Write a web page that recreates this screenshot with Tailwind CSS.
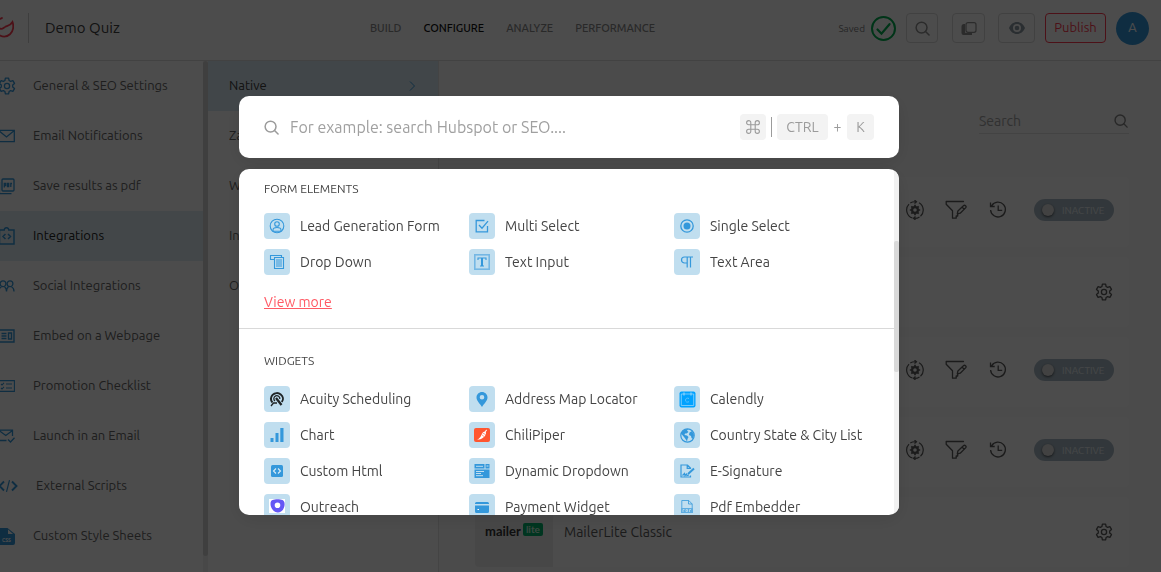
<!DOCTYPE html>
<html lang="en">
<head>
<meta charset="utf-8">
<meta name="viewport" content="width=device-width, initial-scale=1">
<title>Demo Quiz</title>
<script src="https://cdn.jsdelivr.net/npm/@tailwindcss/browser@4"></script>
</head>
<body class="h-screen overflow-hidden bg-white font-['Ubuntu','Noto_Sans',sans-serif] text-[13px] text-[#3c3c3c]">
<svg class="hidden">
  <defs>
    <symbol id="search" viewBox="0 0 16 16"><g fill="none" stroke="currentColor" stroke-width="1.600" stroke-linecap="round"><circle cx="7" cy="7" r="5.800"/><path d="M11.200 11.200L15 15"/></g></symbol>
    <symbol id="gear" viewBox="0 0 18 18"><g fill="none" stroke="currentColor" stroke-width="1.300" stroke-linejoin="round"><path d="M7.400 1.200h3.200l.5 2.300 1.500.9 2.300-.8 1.600 2.800-1.800 1.600v2l1.800 1.600-1.600 2.800-2.300-.8-1.500.9-.5 2.300H7.400l-.5-2.300-1.500-.9-2.300.8-1.600-2.800L3.300 10V8L1.500 6.400l1.600-2.800 2.300.8 1.500-.9z"/><circle cx="9" cy="9" r="2.600"/></g></symbol>
    <symbol id="sync" viewBox="0 0 20 20"><g fill="none" stroke="currentColor" stroke-width="1.200"><path d="M7.500 18A8.400 8.400 0 0 1 4 4.200M5.300 3.100A8.400 8.400 0 0 1 10.500 1.800M14 2.800A8.400 8.400 0 0 1 15.500 16.300M14.500 16.900A8.400 8.400 0 0 1 9.500 18.300M9.500 0l2 1.800-2 1.700M10.500 16.500l-2 1.800 2 1.700"/><circle cx="10" cy="10" r="2.900" stroke-width="2.200"/><path stroke-width="1.700" d="M10 4.800v2M10 13.200v2M4.800 10h2M13.200 10h2M6.300 6.300l1.400 1.400M12.300 12.300l1.400 1.400M6.300 13.700l1.400-1.400M12.300 7.700l1.400-1.400"/></g></symbol>
    <symbol id="filter" viewBox="0 0 22 20"><g fill="none" stroke="currentColor" stroke-width="1.300" stroke-linejoin="round" stroke-linecap="round"><path d="M18.500 1.500H1.200v2.700l6.300 6.600v7.400h3.700v-2.200h1.500v-1.500"/><path d="M12.300 13.800l.6-2.800 5.500-5.200a1.400 1.400 0 0 1 2.200 2.100L15.200 13.200zM17 7l2.200 2.200"/></g></symbol>
    <symbol id="history" viewBox="0 0 18 18"><g fill="none" stroke="currentColor" stroke-width="1.300"><path d="M2.600 4.800A7.400 7.400 0 1 1 1.600 9M1.500 1.500v4h4.200M9.200 4.600v4.800h4"/></g></symbol>
    <symbol id="mail" viewBox="0 0 17 14"><path fill="none" stroke="currentColor" stroke-width="1.300" d="M.7 1.300h15.600v11.400H.7zM.7 1.500l7.800 6.500 7.800-6.500"/></symbol>
  </defs>
</svg>

<div class="flex h-full flex-col">
  <header class="flex h-[61px] shrink-0 items-center border-b border-[#dcdcdc] pr-3 pb-1">
    <svg class="h-[26px] w-[14px] shrink-0 text-[#ff3b50]" viewBox="0 0 14 26"><g fill="none" stroke="currentColor" stroke-width="1.800" stroke-linecap="round"><path d="M0 4c.8-.3 1.500-.6 2-1M0 13.500c2 1.500 3.500-.8 5.500-1.800 2.500-1 5-1.200 7-4.700 1.500 4 .8 9.500-2.500 12.200C7 21.800 3 22 0 20.500"/></g></svg>
    <div class="ml-3.5 h-[30px] w-px bg-[#cfcfcf]"></div>
    <h1 class="ml-4 w-[250px] text-[15px] text-[#404040]">Demo Quiz</h1>
    <nav class="ml-[75px] flex gap-[22px] text-[11px] font-medium text-[#8a8a8a]">
      <a href="#">BUILD</a><a href="#" class="text-[#101010]">CONFIGURE</a><a href="#">ANALYZE</a><a href="#">PERFORMANCE</a>
    </nav>
    <div class="ml-auto flex items-center">
      <span class="mr-1.5 text-[10px] text-[#808080]">Saved</span>
      <svg class="mr-2.5 size-[25px] text-[#00b050]" viewBox="0 0 25 25"><g fill="none" stroke="currentColor"><circle cx="12.500" cy="12.500" r="11.500" stroke-width="2"/><path stroke-width="2.200" stroke-linecap="round" d="M6.500 13.500l4 4.200 8-9.500"/></g></svg>
      <button aria-label="Search" class="mr-3.5 flex h-[30px] w-8 items-center justify-center rounded-sm border border-[#dadada] text-[#909090]"><svg class="size-[15px]"><use href="#search"/></svg></button>
      <button aria-label="Duplicate" class="mr-[13px] flex h-[30px] w-[33px] items-center justify-center rounded-sm border border-[#dadada] text-[#909090]"><svg class="h-[13px] w-4" viewBox="0 0 16 13"><path fill="currentColor" d="M3 2h1v8q0 1 1 1h6v2H2.500Q.5 13 .5 11V4.500Q.5 2 3 2z"/><rect x="5" y=".7" width="10" height="9.600" rx="2" fill="none" stroke="currentColor" stroke-width="1.200"/></svg></button>
      <button aria-label="Preview" class="mr-2.5 flex h-[30px] w-[37px] items-center justify-center rounded-sm border border-[#dadada] text-[#8d99a3]"><svg class="h-3 w-4" viewBox="0 0 16 12"><path fill="currentColor" fill-rule="evenodd" d="M8 0c3.500 0 6.500 2.300 8 6-1.500 3.700-4.500 6-8 6S1.500 9.700 0 6c1.500-3.700 4.500-6 8-6zm0 2a4 4 0 1 0 0 8 4 4 0 0 0 0-8zm0 1.700a2.300 2.300 0 1 1 0 4.600 2.300 2.300 0 0 1 0-4.600z"/></svg></button>
      <button class="mr-2.5 h-[30px] w-[61px] rounded-sm border border-[#ff3b50] text-[13px] text-[#ff3b50]">Publish</button>
      <button class="size-[33px] rounded-full bg-[#3498db] text-[13px] text-white">A</button>
    </div>
  </header>

  <div class="flex min-h-0 flex-1">
    <aside class="flex w-[208px] shrink-0 bg-white">
      <nav class="flex-1 overflow-hidden text-[13px] text-[#666] *:flex *:h-[50px] *:items-center">
        <a href="#"><span class="w-[33px] text-[#3498db]"><svg class="-ml-0.5 size-[18px]"><use href="#gear"/></svg></span>General &amp; SEO Settings</a>
        <a href="#"><span class="w-[33px] text-[#3498db]"><svg class="-ml-0.5 h-3.5 w-[17px]"><use href="#mail"/></svg></span>Email Notifications</a>
        <a href="#"><span class="w-[33px] text-[#3498db]"><svg class="-ml-0.5 size-[17px]" viewBox="0 0 17 17"><g fill="none" stroke="currentColor" stroke-width="1.300"><rect x="4" y="1" width="12" height="12" rx="1"/><path d="M1.500 4v11.700h12M6.300 9.500V5.500h1.400v2H6.300M9.500 5.500h1.200v3H9.500zM12.800 9V5.500H14"/></g></svg></span>Save results as pdf</a>
        <a href="#" class="bg-[#e1eff6] text-[#222]"><span class="w-[33px] text-[#3498db]"><svg class="-ml-0.5 h-[18px] w-[17px]" viewBox="0 0 17 18"><g fill="none" stroke="currentColor" stroke-width="1.500"><path d="M1.500 3h4.700a2.300 2.300 0 0 1 4.600 0h5.200v14H1.500zM7.500 7L5 9.500 7.500 12M10 7l2.500 2.500L10 12"/></g></svg></span>Integrations</a>
        <a href="#"><span class="w-[33px] text-[#3498db]"><svg class="-ml-0.5 h-3 w-[17px]" viewBox="0 0 17 12"><g fill="none" stroke="currentColor" stroke-width="1.300"><circle cx="5" cy="3.800" r="2.900"/><circle cx="12" cy="3.800" r="2.900"/><path d="M1 11.500c0-2 1-4 2.500-4.500M6.500 7c1 .5 2 2 2 4.500 0-2.500 1-4 2-4.500M13.500 7c1.500.5 2.500 2.500 2.500 4.500"/></g></svg></span>Social Integrations</a>
        <a href="#"><span class="w-[33px] text-[#3498db]"><svg class="-ml-0.5 h-3.5 w-[17px]" viewBox="0 0 17 14"><path fill="none" stroke="currentColor" stroke-width="1.400" d="M1 1h15v12H1zM3.500 4.500h5M3.500 7h5M3.500 9.500h5M10.500 4h3v6h-3z"/></svg></span>Embed on a Webpage</a>
        <a href="#"><span class="w-[33px] text-[#3498db]"><svg class="-ml-0.5 h-3 w-[17px]" viewBox="0 0 17 12"><path fill="none" stroke="currentColor" stroke-width="1.100" d="M.6.6h15.800v10.800H.6zM3 4l1 1 2-2.200M3 8l1 1 2-2.200M8 4h6M8 8h6"/></svg></span>Promotion Checklist</a>
        <a href="#"><span class="w-[33px] text-[#3498db]"><svg class="-ml-0.5 h-3.5 w-[17px]" viewBox="0 0 17 14"><path fill="none" stroke="currentColor" stroke-width="1.300" d="M8.500 11.500H1V1.200h13.500V7M1 1.500l6.800 5 6.700-5M10 10.500l2.500 2.500 4-4.200"/></svg></span>Launch in an Email</a>
        <a href="#"><span class="w-9 text-[#3498db]"><svg class="-ml-0.5 h-3 w-5" viewBox="0 0 20 12"><path fill="none" stroke="currentColor" stroke-width="1.900" d="M6 1.500L1.500 6 6 10.500M14 1.500L18.500 6 14 10.500"/><path fill="none" stroke="currentColor" stroke-width="1.200" d="M11.500.2l-3 11.600"/></svg></span>External Scripts</a>
        <a href="#"><span class="w-[33px] text-[#3498db]"><svg class="-ml-0.5 size-[17px]" viewBox="0 0 17 17"><path fill="currentColor" d="M1 0h8.500L17 6v9q0 2-2 2H1z"/><path fill="#fff" d="M10 1.500V6h5z"/><text x="4" y="14" font-size="5" font-weight="700" fill="#fff">CSS</text></svg></span>Custom Style Sheets</a>
      </nav>
      <div class="w-[5px] bg-[#f1f1f1] pb-4"><div class="h-full rounded-full bg-[#d4d4d4]"></div></div>
    </aside>

    <nav class="w-[231px] shrink-0 border-r border-[#e4e4e4] text-[13px] text-[#666] *:flex *:h-[50px] *:items-center *:px-[21px]">
      <a href="#" class="justify-between bg-[#dbecf6] text-[#404040]">Native<svg class="h-2.5 w-[9px] text-[#3498db]" viewBox="0 0 9 10"><path fill="none" stroke="currentColor" d="M2 .5L6.500 5 2 9.500"/></svg></a>
      <a href="#">Zapier</a>
      <a href="#">Web</a>
      <a href="#">Integromat</a>
      <a href="#">Others</a>
    </nav>

    <main class="flex-1 overflow-hidden bg-[#fafafa] pt-12 pr-8 pl-9">
      <label class="ml-auto flex h-[25px] w-[150px] items-center border-b border-[#e0e0e0] text-[#858585]">
        <input type="search" placeholder="Search" aria-label="Search integrations" class="w-0 flex-1 text-[14px] outline-none placeholder:text-[#a5a5a5]">
        <svg class="mr-px size-3.5"><use href="#search"/></svg>
      </label>
      <div class="mt-[43px] flex flex-col gap-2.5 text-[#5a5a5a] *:flex *:h-[70px] *:items-center *:justify-end *:rounded *:bg-white *:pr-[15px]">
        <section class="pb-1">
          <button aria-label="Sync settings" class="mr-5"><svg class="size-5"><use href="#sync"/></svg></button>
          <button aria-label="Edit filter" class="mr-[22px]"><svg class="h-5 w-[22px]"><use href="#filter"/></svg></button>
          <button aria-label="History" class="mr-[27px]"><svg class="size-[18px]"><use href="#history"/></svg></button>
          <label class="flex h-[22px] w-20 items-center rounded-full bg-[#a9bac6] px-2 text-[10px] text-[#e8eef2]"><input type="checkbox" class="mr-2 size-3 appearance-none rounded-full bg-[#dcdcdc] shadow-sm shadow-black/50">INACTIVE</label>
        </section>
        <section><button aria-label="Settings"><svg class="mr-px size-[18px]"><use href="#gear"/></svg></button></section>
        <section class="pb-1">
          <button aria-label="Sync settings" class="mr-5"><svg class="size-5"><use href="#sync"/></svg></button>
          <button aria-label="Edit filter" class="mr-[22px]"><svg class="h-5 w-[22px]"><use href="#filter"/></svg></button>
          <button aria-label="History" class="mr-[27px]"><svg class="size-[18px]"><use href="#history"/></svg></button>
          <label class="flex h-[22px] w-20 items-center rounded-full bg-[#a9bac6] px-2 text-[10px] text-[#e8eef2]"><input type="checkbox" class="mr-2 size-3 appearance-none rounded-full bg-[#dcdcdc] shadow-sm shadow-black/50">INACTIVE</label>
        </section>
        <section class="pb-1">
          <button aria-label="Sync settings" class="mr-5"><svg class="size-5"><use href="#sync"/></svg></button>
          <button aria-label="Edit filter" class="mr-[22px]"><svg class="h-5 w-[22px]"><use href="#filter"/></svg></button>
          <button aria-label="History" class="mr-[27px]"><svg class="size-[18px]"><use href="#history"/></svg></button>
          <label class="flex h-[22px] w-20 items-center rounded-full bg-[#a9bac6] px-2 text-[10px] text-[#e8eef2]"><input type="checkbox" class="mr-2 size-3 appearance-none rounded-full bg-[#dcdcdc] shadow-sm shadow-black/50">INACTIVE</label>
        </section>
        <section>
          <div class="flex h-[70px] w-[78px] items-center justify-center rounded-l bg-[#efefef] font-['Lato',sans-serif] text-[13px] font-bold text-[#333]">mailer<span class="mb-1.5 ml-0.5 rounded-xs bg-[#00b36b] px-[3px] text-[10px] leading-[13px] text-[#c8f0dc]">lite</span></div>
          <h2 class="mr-auto ml-[11px] text-[14px]">MailerLite Classic</h2>
          <button aria-label="Settings"><svg class="mr-px size-[18px]"><use href="#gear"/></svg></button>
        </section>
      </div>
    </main>
  </div>
</div>

<div class="fixed inset-0 flex flex-col items-center gap-[11px] bg-black/70 pt-24 pr-[23px]">
  <div class="flex h-[62px] w-full max-w-[660px] shrink-0 items-center rounded-[10px] bg-white px-[25px] text-[#9b9b9b] shadow-[0_4px_20px_rgba(0,0,0,0.1)]">
    <svg class="size-[15px] shrink-0"><use href="#search"/></svg>
    <input type="text" aria-label="Search commands" placeholder="For example: search Hubspot or SEO...." class="mx-[11px] min-w-0 flex-1 text-[16px] outline-none placeholder:text-[#a0a0a0]">
    <kbd class="flex size-[26px] items-center justify-center rounded bg-[#f3f3f3]"><svg class="size-3.5" viewBox="0 0 14 14"><path fill="none" stroke="currentColor" stroke-width="1.100" d="M4.800 4.800V2.700a2.100 2.100 0 1 0-2.100 2.100h8.600a2.100 2.100 0 1 0-2.100-2.100v8.600a2.100 2.100 0 1 0 2.100-2.100H2.700a2.100 2.100 0 1 0 2.100 2.100z"/></svg></kbd>
    <span class="mx-[5px] h-5 w-px bg-[#9b9b9b]"></span>
    <kbd class="flex h-[26px] w-[51px] items-center justify-center rounded bg-[#f3f3f3] font-['Ubuntu','Noto_Sans',sans-serif] text-[14px]">CTRL</kbd>
    <span class="w-[19px] text-center text-[14px]">+</span>
    <kbd class="flex h-[26px] w-[27px] items-center justify-center rounded bg-[#f3f3f3] font-['Ubuntu','Noto_Sans',sans-serif] text-[14px]">K</kbd>
  </div>

  <div class="flex h-[346px] w-full max-w-[660px] shrink-0 overflow-hidden rounded-[10px] bg-white shadow-[0_4px_20px_rgba(0,0,0,0.1)]">
    <div class="flex-1 overflow-hidden text-[#444]">
      <section class="border-b border-[#d9d9d9] px-[25px] pt-3 pb-[15px]">
        <h2 class="text-[12px] leading-4">FORM ELEMENTS</h2>
        <div class="mt-4 grid grid-cols-[205px_205px_1fr] gap-y-2.5 whitespace-nowrap text-[14px] *:flex *:h-[26px] *:items-center *:gap-2.5 [&_span]:flex [&_span]:size-[26px] [&_span]:items-center [&_span]:justify-center [&_span]:rounded [&_span]:bg-[#c0deef] [&_span]:text-[#3498db]">
          <button><span><svg class="size-4" viewBox="0 0 16 16"><g fill="none" stroke="currentColor" stroke-width="1.100"><circle cx="8" cy="8" r="6.800"/><circle cx="8" cy="6" r="2.300"/><path d="M4 13.200V12c0-2 2-2.500 4-2.500s4 .5 4 2.500v1.200z"/></g></svg></span>Lead Generation Form</button>
          <button><span><svg class="size-3.5" viewBox="0 0 14 14"><path fill="none" stroke="currentColor" stroke-width="1.300" d="M9.500 1.500H1.200v11.300h11.300V7M4 6l3 3.200 6-7"/></svg></span>Multi Select</button>
          <button><span><svg class="size-3.5" viewBox="0 0 14 14"><circle cx="7" cy="7" r="6.200" fill="none" stroke="currentColor" stroke-width="1.300"/><circle cx="7" cy="7" r="3.500" fill="currentColor"/></svg></span>Single Select</button>
          <button><span><svg class="size-4" viewBox="0 0 16 16"><path fill="none" stroke="currentColor" stroke-width="1.100" d="M5 5.500H1.500v-4h11v2M5.500 3.500h9v11h-9zM7 6h6M7 8h6M7 10h6M7 12h6"/></svg></span>Drop Down</button>
          <button><span><svg class="size-4" viewBox="0 0 16 16"><rect x=".8" y=".8" width="14.400" height="14.400" fill="none" stroke="currentColor" stroke-opacity=".55" stroke-width="1.600"/><path fill="none" stroke="currentColor" stroke-width="1.100" d="M4 6V4h8v2M6 12h4"/><path stroke="currentColor" stroke-width="2" d="M8 4v8"/></svg></span>Text Input</button>
          <button><span><svg class="h-3 w-3.5" viewBox="0 0 14 12"><path fill="none" stroke="currentColor" stroke-width="1.200" d="M13 1H4.500a2.800 2.800 0 0 0 0 6H7M7.200 1v10.500M10.500 1v10.500"/></svg></span>Text Area</button>
        </div>
        <a href="#" class="mt-4 block w-fit text-[14px] leading-[22px] text-[#ff5964] underline">View more</a>
      </section>
      <section class="px-[25px] pt-6">
        <h2 class="text-[12px] leading-4">WIDGETS</h2>
        <div class="mt-[17px] grid grid-cols-[205px_205px_1fr] gap-y-2.5 whitespace-nowrap text-[14px] *:flex *:h-[26px] *:items-center *:gap-2.5 [&_span]:flex [&_span]:size-[26px] [&_span]:items-center [&_span]:justify-center [&_span]:rounded [&_span]:bg-[#c0deef] [&_span]:text-[#3498db]">
          <button><span><svg class="size-4" viewBox="0 0 16 16"><g fill="none" stroke="#1f2426"><path stroke-width="2" d="M3.500 11.500A6 5.600 0 1 1 12.800 11"/><path stroke-width="1.300" d="M6 10A3 3 0 1 1 10.800 8M2 15l2.500-3h3.500"/><path stroke-width="2.300" d="M7 7l5.500 7"/></g></svg></span>Acuity Scheduling</button>
          <button><span><svg class="h-[15px] w-3" viewBox="0 0 12 15"><path fill="currentColor" fill-rule="evenodd" d="M6 0c3 0 5.500 2.400 5.500 5.500C11.500 9 8 11.500 6 15 4 11.500.5 9 .5 5.500.5 2.400 3 0 6 0zm0 3a2.300 2.300 0 1 0 0 4.600A2.300 2.300 0 0 0 6 3z"/></svg></span>Address Map Locator</button>
          <button><span><svg class="size-[17px]" viewBox="0 0 17 17"><rect x=".5" y=".5" width="16" height="16" rx="2" fill="#00a2ff"/><path d="M2.300 3h12.400v11.500H2.300z" fill="none" stroke="#8fd3fb" stroke-width=".8"/><path stroke="#8fd3fb" stroke-width="1.200" d="M5 1.500v3M12 1.500v3"/><path d="M10 7.500c-2-1-3.500 0-3.500 1.700s1.500 2.500 3.500 1.500" fill="none" stroke="#5cc0fa"/></svg></span>Calendly</button>
          <button><span><svg class="size-3.5" viewBox="0 0 14 14"><path fill="currentColor" d="M.5 10h3v4h-3zM5.500 5h3v9h-3zM10.300 0h3.200v14h-3.200z"/></svg></span>Chart</button>
          <button><span><svg class="size-4" viewBox="0 0 16 16"><rect y="1" width="16" height="14" rx="2" fill="#ff5630"/><path fill="#fff" d="M12.300 2.500l.7 1-1.200 1.300c.7 1.800-.3 4-2.500 5.800-1.800 1.400-3.800 2.200-6.200 2.300 2.500-1.800 3.700-3 4.300-5 .5-1.700 1.500-2.900 3.400-3.500z"/><path stroke="#ff5630" stroke-width=".6" d="M7.500 7.500l2.500 2M8.500 6l3 1.500"/></svg></span>ChiliPiper</button>
          <button><span><svg class="size-[15px]" viewBox="0 0 15 15"><circle cx="7.500" cy="7.500" r="6.700" fill="none" stroke="currentColor" stroke-width="1.200"/><path fill="currentColor" d="M1 5.500C2.500 2.500 5 1 8.500 1L7 2.500 8.500 4 6.500 5.500H5L4.500 7 7 7.500 8.500 9 7.500 11 7 13.500 5.500 11 4 9zM9.500 4.500L12 3l2 4-1 4-1.500-1-.5-2-2-1z"/></svg></span>Country State &amp; City List</button>
          <button><span><svg class="size-3" viewBox="0 0 12 12"><rect width="12" height="12" rx="1.500" fill="currentColor"/><path fill="none" stroke="#d8ecf7" stroke-width="1.100" d="M5 3.500L2.500 6 5 8.500M7 3.500L9.500 6 7 8.500"/></svg></span>Custom Html</button>
          <button><span><svg class="h-3.5 w-4" viewBox="0 0 16 14"><path fill="currentColor" d="M.5 0h10v4.500H.5zM11.500 0h4v4.500h-4zM.5 5.500h15V14H.5z"/><path stroke="#c0deef" d="M2 2.300h7M2 7.500h8M2 9.500h5M2 11.700h7M12.500 2h2"/></svg></span>Dynamic Dropdown</button>
          <button><span><svg class="h-3.5 w-[15px]" viewBox="0 0 15 14"><path fill="none" stroke="currentColor" stroke-width="1.200" d="M10.500 5V4L7.500 1H1v12h9.500v-1.500M7.200 1v3.300h3M2.500 11.500l2-2 .5 2 1.500-1.500.5 1.500 2-.5"/><path stroke="currentColor" stroke-width="2" d="M8 10l6-5.500"/></svg></span>E-Signature</button>
          <button><span><svg class="size-4" viewBox="0 0 16 16"><path fill="#fff" d="M0 0h16v14H0z"/><path fill="#6457f5" fill-rule="evenodd" d="M3.500 1C6 0 11 0 13.500 1 16 2 16 6 15 8.500c-1 3.300-4 5.300-6.500 5C4 13 1.500 8.500 1.500 5 1.500 3 2 1.500 3.500 1zM8.500 3.500a2.800 2.800 0 1 0 0 5.600 2.800 2.800 0 0 0 0-5.600z"/></svg></span>Outreach</button>
          <button><span><svg class="h-[11px] w-3.5" viewBox="0 0 14 11"><path fill="currentColor" d="M1.500 0h11Q14 0 14 1.500V2H0v-.5Q0 0 1.500 0zM0 3.500h14v6q0 1.500-1.500 1.500h-11Q0 11 0 9.500z"/><path stroke="#fff" d="M2.500 7.500h1.500"/></svg></span>Payment Widget</button>
          <button><span><svg class="h-4 w-3" viewBox="0 0 12 16"><path fill="none" stroke="currentColor" stroke-opacity=".8" d="M.8 9V1.500h7L11.200 5v4M7.500 1.500V5h3.700"/><path fill="currentColor" fill-opacity=".7" d="M0 9h12v5H0z"/><path fill="none" stroke="#c0deef" stroke-width=".8" d="M2 13v-2.500h1.500M5 10.500h1.500v2H5zM8.500 13v-2.500H10"/></svg></span>Pdf Embedder</button>
        </div>
      </section>
    </div>
    <div class="w-[5px] shrink-0 bg-[#f1f1f1] pt-[72px]"><div class="h-[131px] rounded-xs bg-[#d9d9d9]"></div></div>
  </div>
</div>
</body>
</html>
